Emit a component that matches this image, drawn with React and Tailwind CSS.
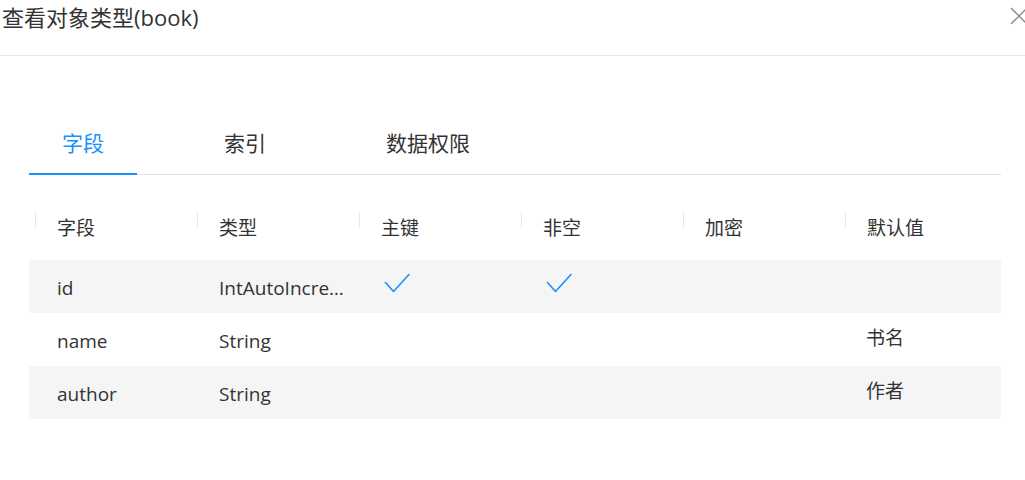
import React from "react";

const FONT = {
  fontFamily: '"Open Sans", "Noto Sans CJK SC", sans-serif',
};

const columns = ["字段", "类型", "主键", "非空", "加密", "默认值"];

const rows = [
  { name: "id", type: "IntAutoIncrement", pk: true, notNull: true, enc: false, def: "" },
  { name: "name", type: "String", pk: false, notNull: false, enc: false, def: "书名" },
  { name: "author", type: "String", pk: false, notNull: false, enc: false, def: "作者" },
];

function Check() {
  return (
    <svg width="26" height="21" viewBox="0 0 26 21" fill="none" className="mt-[-10px] ml-[3px]">
      <polyline
        points="1.5,9.5 9.5,18.5 25,1.5"
        stroke="#1890ff"
        strokeWidth="1.6"
        strokeLinecap="round"
        strokeLinejoin="round"
      />
    </svg>
  );
}

function CloseIcon() {
  return (
    <svg width="18" height="18" viewBox="0 0 18 18" fill="none">
      <path d="M1 1 L17 17 M17 1 L1 17" stroke="#8c8c8c" strokeWidth="1.5" />
    </svg>
  );
}

export default function App() {
  const tabs = ["字段", "索引", "数据权限"];
  return (
    <div className="w-[1025px] h-[480px] overflow-hidden bg-white text-[#333]" style={FONT}>
      {/* dialog header */}
      <div className="h-[56px] border-b border-[#e8e8e8] flex justify-between items-start">
        <div className="pl-[2px] pt-[2px] text-[22px] leading-[30px] text-[#333]">查看对象类型(book)</div>
        <div className="pt-[7px] -mr-[3px]">
          <CloseIcon />
        </div>
      </div>

      <div className="pl-[29px] pr-[24px]">
        {/* tabs */}
        <div className="mt-[72px] flex gap-[54px] border-b border-[#e0e0e0]">
          {tabs.map((t, i) => (
            <div
              key={t}
              className={
                i === 0
                  ? "px-[33px] pb-[15px] leading-[30px] text-[21px] border-b-2 border-[#1890ff] -mb-px text-[#1890ff]"
                  : "px-[33px] pb-[15px] leading-[30px] text-[21px] border-b-2 border-transparent -mb-px text-[#333]"
              }
            >
              {t}
            </div>
          ))}
        </div>

        {/* table header */}
        <div className="mt-[37px] h-[48px] grid grid-cols-6">
          {columns.map((c) => (
            <div key={c} className="flex items-start">
              <div className="ml-[6px] w-px h-[16px] bg-[#e8e8e8]" />
              <div className="ml-[21px] mt-[4px] text-[19px] leading-[24px] text-[#333]">{c}</div>
            </div>
          ))}
        </div>

        {/* table body */}
        <div>
          {rows.map((r, i) => (
            <div
              key={r.name}
              className={
                i % 2 === 0
                  ? "h-[53px] pt-[4px] grid grid-cols-6 items-center bg-[#f5f5f5] text-[19px]"
                  : "h-[53px] pt-[4px] grid grid-cols-6 items-center bg-white text-[19px]"
              }
            >
              <div className="pl-[28px]">{r.name}</div>
              <div className="pl-[28px] pr-[4px] truncate">{r.type}</div>
              <div className="pl-[28px] flex">{r.pk ? <Check /> : null}</div>
              <div className="pl-[28px] flex">{r.notNull ? <Check /> : null}</div>
              <div className="pl-[28px]">{r.enc ? <Check /> : null}</div>
              <div className="pl-[27px] -mt-[6px]">{r.def}</div>
            </div>
          ))}
        </div>
      </div>
    </div>
  );
}
